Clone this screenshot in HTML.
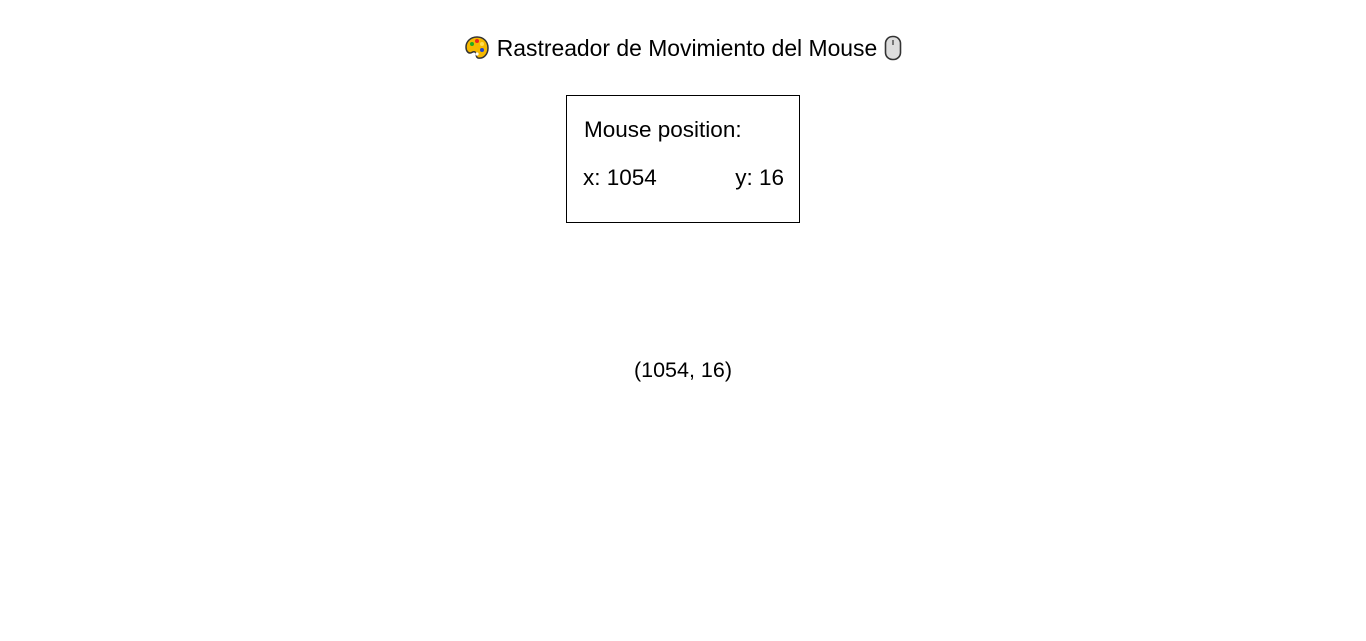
<!DOCTYPE html>
<html><head><meta charset="utf-8"><style>
body{margin:0;width:1366px;height:641px;background:#fff;font-family:"Liberation Sans",sans-serif;color:#000;position:relative;overflow:hidden}
.t{position:absolute;top:33px;left:0;width:1366px;text-align:center;font-size:22.9px;line-height:26px;white-space:nowrap}
.t span,.t svg{vertical-align:middle}
.box{position:absolute;left:566px;top:95px;width:232px;height:126px;border:1px solid #000}
.l{position:absolute;font-size:22.5px;line-height:26px}
.c{position:absolute;top:357px;left:0;width:1366px;text-align:center;font-size:21.5px;line-height:26px}
</style></head><body>
<div class="t"><svg width="26" height="26" viewBox="0 0 26 26"><path d="M13 2C6 2 2 7 2 12c0 4 2 6 4 6 2 0 3-2 5-1 2 1 0 5 3 6 6 1 10-4 10-10C24 6 19 2 13 2z" fill="#f5b800" stroke="#333" stroke-width="1.5"/><circle cx="8" cy="9" r="2" fill="#2a2"/><circle cx="13" cy="6" r="2" fill="#e22"/><circle cx="18" cy="9" r="2" fill="#fd5"/><circle cx="18" cy="15" r="2" fill="#24c"/><circle cx="13" cy="19" r="1.6" fill="#fff"/></svg> <span>Rastreador de Movimiento del Mouse</span> <svg width="18" height="26" viewBox="0 0 18 26"><rect x="1.5" y="1.5" width="15" height="23" rx="7" fill="#ddd" stroke="#333" stroke-width="1.6"/><line x1="9" y1="5" x2="9" y2="10" stroke="#555" stroke-width="1.5"/></svg></div>
<div class="box">
<div class="l" style="left:17px;top:21px">Mouse position:</div>
<div class="l" style="left:16px;top:69px">x: 1054</div>
<div class="l" style="right:15px;top:69px">y: 16</div>
</div>
<div class="c">(1054, 16)</div>
</body></html>
